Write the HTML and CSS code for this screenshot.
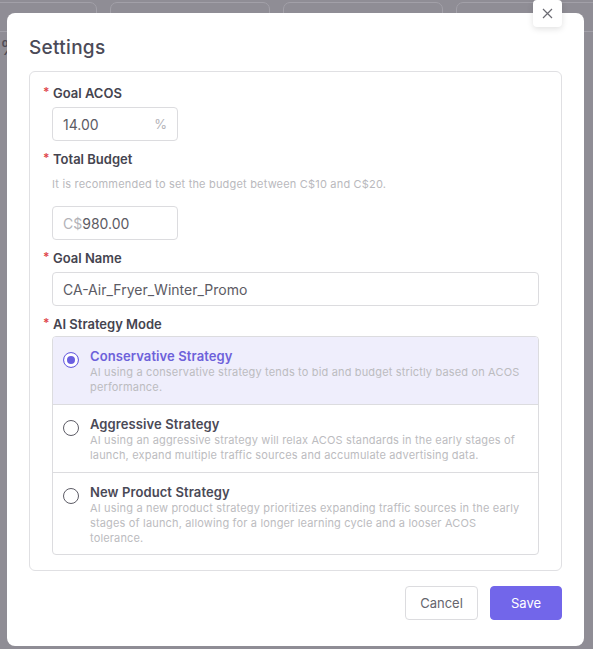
FILE: index.html
```html
<!DOCTYPE html>
<html lang="en">
<head>
<meta charset="utf-8">
<title>Settings</title>
<link rel="stylesheet" href="styles.css">
</head>
<body>
<div class="backdrop">
  <div class="bg-cards">
    <div class="bg-card c1"></div>
    <div class="bg-card c2"></div>
    <div class="bg-card c3"></div>
    <div class="bg-card c4"></div>
    <div class="bg-card c5"></div>
  </div>
  <div class="bg-left">
    <div class="bg-pct">%</div>
    <div class="bg-sub">P</div>
  </div>
</div>

<div class="modal">
  <button class="close" aria-label="Close">
    <svg width="11" height="11" viewBox="0 0 11 11"><path d="M1 1L10 10M10 1L1 10" stroke="#6b6b73" stroke-width="1.2" fill="none"/></svg>
  </button>
  <h2 class="title">Settings</h2>
  <div class="form">
    <div class="label"><span class="req">*</span>Goal ACOS</div>
    <div class="input small"><span class="val">14.00</span><span class="suffix">%</span></div>

    <div class="label gap"><span class="req">*</span>Total Budget</div>
    <div class="hint">It is recommended to set the budget between C$10 and C$20.</div>
    <div class="input small"><span class="prefix">C$</span><span class="val">980.00</span></div>

    <div class="label gap"><span class="req">*</span>Goal Name</div>
    <div class="input wide"><span class="val">CA-Air_Fryer_Winter_Promo</span></div>

    <div class="label gap"><span class="req">*</span>AI Strategy Mode</div>
    <div class="options">
      <div class="option selected">
        <span class="radio"></span>
        <div class="opt-text">
          <div class="opt-title">Conservative Strategy</div>
          <div class="opt-desc">AI using a conservative strategy tends to bid and budget strictly based on ACOS performance.</div>
        </div>
      </div>
      <div class="option">
        <span class="radio"></span>
        <div class="opt-text">
          <div class="opt-title">Aggressive Strategy</div>
          <div class="opt-desc">AI using an aggressive strategy will relax ACOS standards in the early stages of launch, expand multiple traffic sources and accumulate advertising data.</div>
        </div>
      </div>
      <div class="option">
        <span class="radio"></span>
        <div class="opt-text">
          <div class="opt-title">New Product Strategy</div>
          <div class="opt-desc">AI using a new product strategy prioritizes expanding traffic sources in the early stages of launch, allowing for a longer learning cycle and a looser ACOS tolerance.</div>
        </div>
      </div>
    </div>
  </div>
  <div class="footer">
    <button class="btn cancel">Cancel</button>
    <button class="btn save">Save</button>
  </div>
</div>
</body>
</html>
```

FILE: styles.css
```css
* { box-sizing: border-box; }
html, body {
  margin: 0;
  padding: 0;
}
body {
  width: 593px;
  height: 649px;
  overflow: hidden;
  position: relative;
  background: #8f8d95;
  font-family: Inter, "Noto Sans", "Liberation Sans", sans-serif;
  color: #4a4956;
}

.backdrop {
  position: absolute;
  inset: 0;
}
.bg-cards {
  display: flex;
  gap: 13px;
  margin-left: -63px;
  padding-top: 2px;
}
.bg-card {
  height: 30px;
  width: 160px;
  border: 1px solid #a2a0a8;
  border-radius: 7px;
  flex: none;
}
.bg-left {
  padding: 4px 0 0 0;
}
.bg-pct {
  font-size: 20px;
  line-height: 24px;
  color: #4e4c55;
  margin-left: 0;
}
.bg-sub {
  font-size: 11px;
  color: #77757d;
  margin-left: 10px;
}

.modal {
  position: absolute;
  left: 7px;
  top: 13px;
  width: 577px;
  height: 633px;
  background: #fff;
  border-radius: 8px;
  padding: 23px 22px 0 22px;
}
.close {
  position: absolute;
  top: -13px;
  right: 22px;
  width: 29px;
  height: 27px;
  background: #fff;
  border: none;
  border-radius: 4px;
  box-shadow: 0 2px 6px rgba(0,0,0,0.12);
  display: flex;
  align-items: center;
  justify-content: center;
  padding: 0;
}
.title {
  margin: 0;
  font-size: 19px;
  font-weight: 500;
  line-height: 24px;
  color: #4b4a57;
  letter-spacing: 0.3px;
}
.form {
  margin-top: 11px;
  border: 1px solid #e0e0e3;
  border-radius: 6px;
  padding: 11px 22px 15px 13px;
}
.label {
  display: flex;
  align-items: center;
  height: 20px;
  font-size: 13px;
  font-weight: 600;
  color: #45444f;
}
.label.gap { margin-top: 8px; }
.req {
  color: #e0474c;
  font-size: 12px;
  width: 10px;
  margin-top: -3px;
}
.hint {
  margin: 7px 0 0 9px;
  font-size: 11px;
  line-height: 16px;
  color: #b9b9bd;
  letter-spacing: 0.19px;
}
.input {
  margin: 4px 0 0 9px;
  height: 34px;
  border: 1px solid #dcdcdf;
  border-radius: 4px;
  display: flex;
  align-items: center;
  padding: 0 10px;
  font-size: 14px;
  color: #5c5b64;
}
.hint + .input { margin-top: 14px; }
.input.small { width: 126px; }
.input.wide { width: auto; }
.input .val { flex: 1; }
.input .suffix {
  color: #b3b3b8;
  font-size: 13px;
}
.input .prefix { color: #b3b3b8; }

.options {
  margin: 2px 0 0 9px;
  border: 1px solid #dcdcdf;
  border-radius: 4px;
  overflow: hidden;
}
.option {
  display: flex;
  align-items: flex-start;
  gap: 11px;
  padding: 10px 12px 9px 10px;
}
.option + .option { border-top: 1px solid #dcdcdf; }
.option:last-child { padding-bottom: 8px; }
.option.selected { background: #efeefc; }
.radio {
  flex: none;
  width: 16px;
  height: 16px;
  border-radius: 50%;
  border: 1px solid #5d5c66;
  background: #fff;
  margin-top: 5px;
}
.selected .radio {
  border-color: #6a5fe0;
  box-shadow: inset 0 0 0 3px #fff, inset 0 0 0 8px #6a5fe0;
}
.opt-title {
  font-size: 13px;
  font-weight: 600;
  line-height: 18px;
  color: #4a4956;
  letter-spacing: 0.1px;
}
.selected .opt-title { color: #6d61da; }
.opt-desc {
  font-size: 11px;
  line-height: 15px;
  color: #bcbcc0;
  letter-spacing: 0.16px;
}

.footer {
  display: flex;
  justify-content: flex-end;
  gap: 12px;
  margin-top: 15px;
}
.btn {
  height: 34px;
  border-radius: 4px;
  font-family: inherit;
  font-size: 13px;
  padding: 0;
}
.cancel {
  width: 73px;
  background: #fff;
  border: 1px solid #dcdcdf;
  color: #66656d;
}
.save {
  width: 72px;
  background: #7266ea;
  border: 1px solid #7266ea;
  color: #fff;
}
```
